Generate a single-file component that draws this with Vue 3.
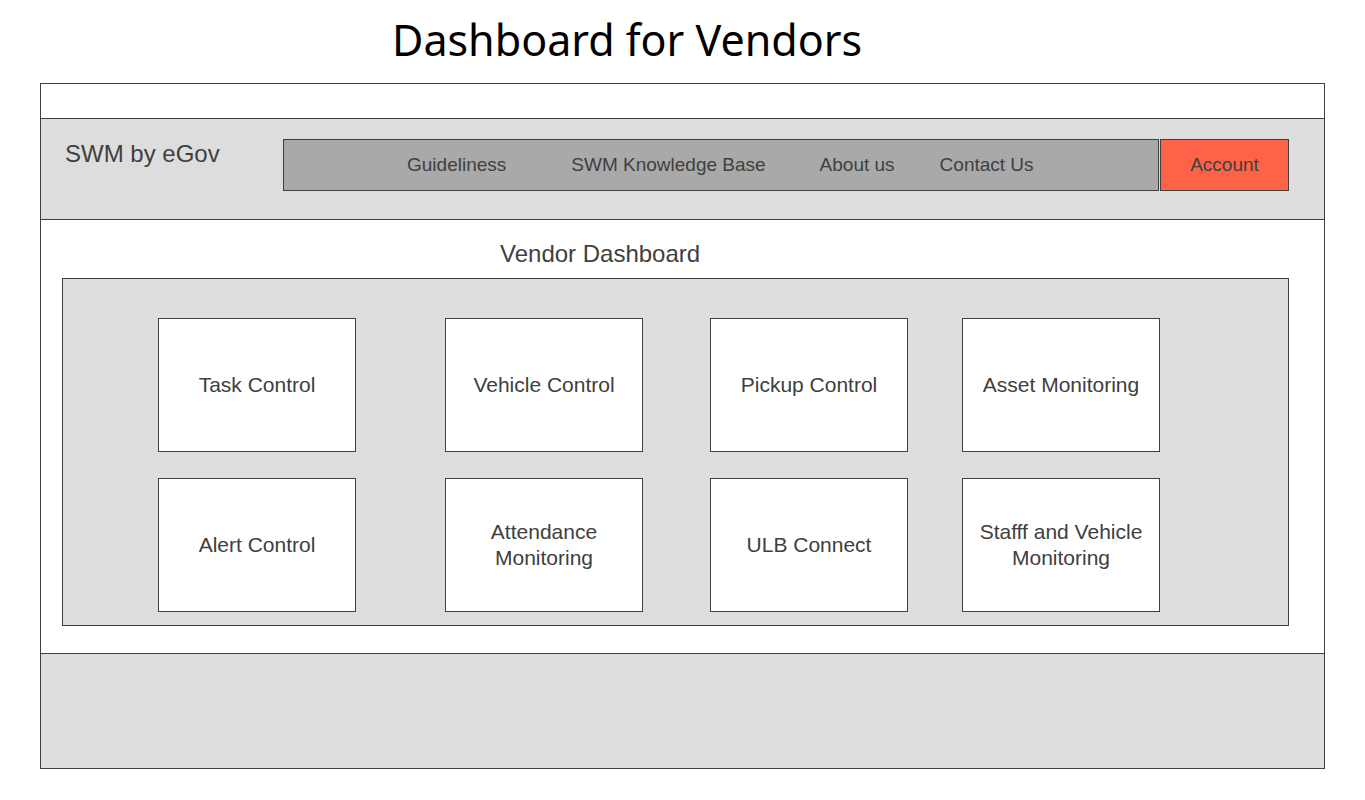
<script setup>
const links = [
  { label: 'Guideliness', key: 'guidelines' },
  { label: 'SWM Knowledge Base', key: 'knowledge' },
  { label: 'About us', key: 'about' },
  { label: 'Contact Us', key: 'contact' }
]
const tiles = [
  'Task Control', 'Vehicle Control', 'Pickup Control', 'Asset Monitoring',
  'Alert Control', 'Attendance Monitoring', 'ULB Connect', 'Stafff and Vehicle Monitoring'
]
</script>

<template>
  <div class="page">
    <h1 class="title">Dashboard for Vendors</h1>
    <div class="frame">
      <div class="strip"></div>
      <header class="header">
        <div class="brand">SWM by eGov</div>
        <nav class="nav">
          <div class="links">
            <a v-for="l in links" :key="l.key" :class="l.key" href="#">{{ l.label }}</a>
          </div>
          <button class="account" type="button">Account</button>
        </nav>
      </header>
      <main class="main">
        <h2 class="heading">Vendor Dashboard</h2>
        <div class="panel">
          <button v-for="t in tiles" :key="t" class="tile" type="button">{{ t }}</button>
        </div>
      </main>
      <footer class="footer"></footer>
    </div>
  </div>
</template>

<style>
body {
  margin: 0;
  background: #fff;
}
</style>

<style scoped>
.page {
  box-sizing: border-box;
  padding: 11px 40px 31px;
  font-family: "Liberation Sans", Arial, sans-serif;
  color: #404040;
}
.title {
  margin: 0 0 14px 352px;
  font-family: "Noto Sans", "Open Sans", sans-serif;
  font-size: 43px;
  line-height: 58px;
  font-weight: 400;
  color: #000;
}
.frame {
  border: 1px solid #404040;
}
.strip {
  height: 34px;
}
.header {
  display: flex;
  align-items: flex-start;
  min-height: 101px;
  padding: 20px 35px 0 24px;
  box-sizing: border-box;
  background: #ddd;
  border-top: 1px solid #404040;
}
.brand {
  width: 218px;
  font-size: 24px;
  line-height: 30px;
}
.nav {
  display: flex;
  flex: 1;
  gap: 1px;
  height: 52px;
}
.links {
  flex: 1;
  display: flex;
  align-items: center;
  box-sizing: border-box;
  padding-left: 123px;
  background: #a9a9a9;
  border: 1px solid #404040;
}
.links a {
  color: inherit;
  text-decoration: none;
  font-size: 19px;
  line-height: 24px;
  white-space: nowrap;
}
.links .guidelines {
  margin-right: 65px;
}
.links .knowledge {
  margin-right: 54px;
}
.links .about {
  margin-right: 45px;
}
.account {
  width: 129px;
  padding: 0;
  font: inherit;
  font-size: 19px;
  color: inherit;
  background: #ff6347;
  border: 1px solid #404040;
}
.main {
  padding: 19px 35px 27px 21px;
  border-top: 1px solid #404040;
}
.heading {
  margin: 0 0 9px 438px;
  font-size: 24px;
  line-height: 30px;
  font-weight: 400;
}
.panel {
  display: grid;
  grid-template-columns: 287fr 265fr 252fr 198px;
  gap: 26px 0;
  padding: 39px 128px 13px 95px;
  background: #ddd;
  border: 1px solid #404040;
}
.tile {
  width: 198px;
  height: 134px;
  padding: 0 12px;
  font: inherit;
  font-size: 21px;
  line-height: 26px;
  color: inherit;
  background: #fff;
  border: 1px solid #404040;
}
.footer {
  height: 114px;
  background: #ddd;
  border-top: 1px solid #404040;
}
</style>
